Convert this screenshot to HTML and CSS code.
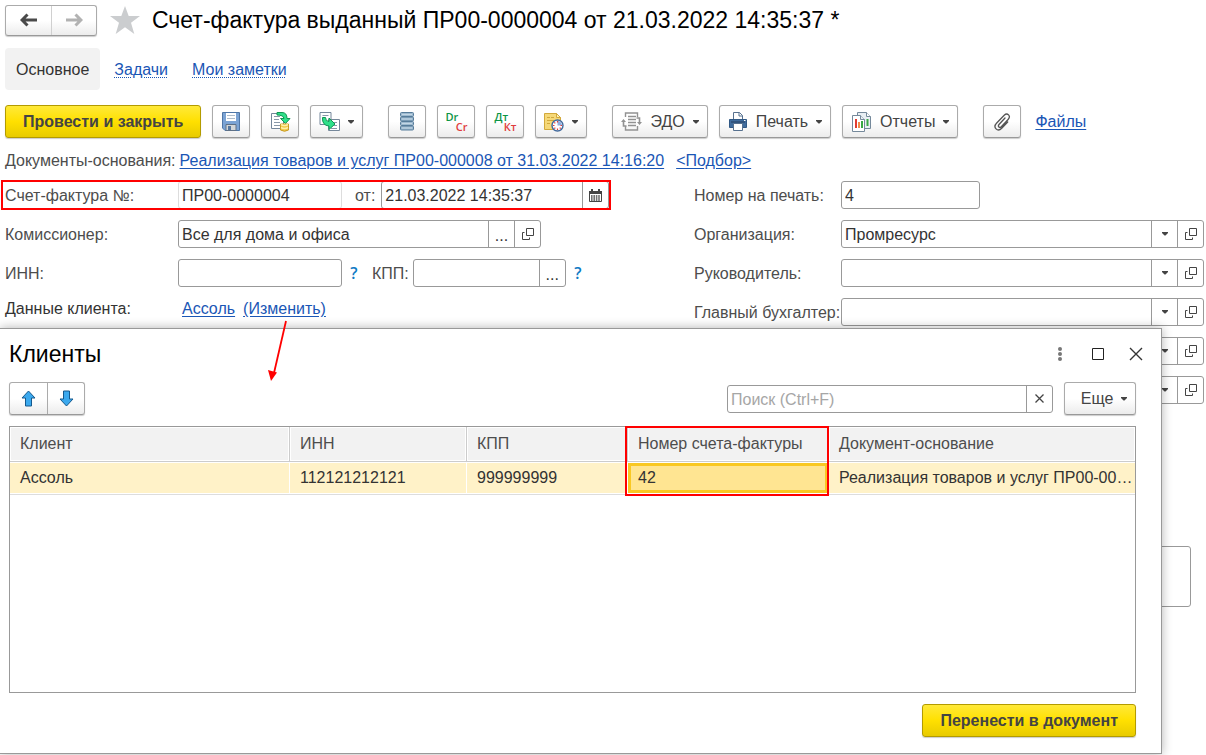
FILE: index.html
```html
<!DOCTYPE html>
<html lang="ru">
<head>
<meta charset="utf-8">
<title>Счет-фактура выданный</title>
<link rel="stylesheet" href="styles.css">
</head>
<body>
<svg width="0" height="0" class="defs" aria-hidden="true">
  <symbol id="open" viewBox="0 0 12 12"><path d="M4.500 .5h7v7h-7zM2.500 4.500h-2v7h7v-2" fill="none" stroke="#444"/></symbol>
  <symbol id="caret" viewBox="0 0 6 4"><path d="M0 0h6v1L3.500 3.500h-1L0 1z" fill="#444"/></symbol>
</svg>
<main class="page">
  <header class="head">
    <div class="pair nav">
      <button aria-label="Назад"><svg width="18" height="14" viewBox="0 0 18 14"><path d="M2 7h15M7.500 1.500L2 7l5.500 5.500" fill="none" stroke="#4a4a4a" stroke-width="3"/></svg></button>
      <button aria-label="Вперед"><svg width="18" height="14" viewBox="0 0 18 14"><path d="M1 7h15M10.500 1.500L16 7l-5.500 5.500" fill="none" stroke="#b2b2b2" stroke-width="3"/></svg></button>
    </div>
    <svg class="star" width="30" height="28" viewBox="0 0 30 28"><path d="M15 0l3.700 10H30l-9 6.800L24.300 28 15 21.300 5.700 28 9 16.800 0 10h11.300z" fill="#cbcdcf"/></svg>
    <h1>Счет-фактура выданный ПР00-0000004 от 21.03.2022 14:35:37 *</h1>
  </header>

  <nav class="tabs">
    <span class="tab">Основное</span>
    <a href="#">Задачи</a>
    <a href="#">Мои заметки</a>
  </nav>

  <div class="toolbar">
    <div class="group">
      <button class="btn primary">Провести и закрыть</button>
      <button class="btn icon" aria-label="Записать"><svg width="18" height="19" viewBox="0 0 18 19"><path d="M.5 .5h17v18H3L.5 16z" fill="#7ba3d4" stroke="#4f76a6"/><path d="M4 1h10v8H4z" fill="#fff"/><path d="M5 3.500h8M5 6.500h8" stroke="#aebccb"/><path d="M4 12.500h10v6H4z" fill="#d3d6d8" stroke="#5e7086"/><path d="M6 14h3v4H6z" fill="#56779f"/></svg></button>
      <button class="btn icon" aria-label="Провести"><svg width="21" height="21" viewBox="0 0 21 21"><path d="M1.500 2.500h12v15h-12z" fill="#fff" stroke="#75879a"/><path d="M4 5.500h6M4 8.500h5M4 11.500h6M4 14.500h6" stroke="#8998a8"/><path d="M7 1.500h5q5 0 5 6h3l-4.500 5L10.500 7.500H14Q13.500 4 7 4z" fill="#2fe08a" stroke="#109653"/><path d="M10.500 13h8v6q-4 2.500-8 0z" fill="#f2ca4a" stroke="#c79a22"/><path d="M11 13.500q3.500 2 7 0M11 16.500q3.500 2 7 0" fill="none" stroke="#fff1aa" stroke-width="1.500"/></svg></button>
      <button class="btn drop" aria-label="Создать на основании"><svg width="21" height="21" viewBox="0 0 21 21"><path d="M1 1.500h11v12H1z" fill="#fff" stroke="#75879a"/><path d="M3.500 4.500h6M3.500 7.500h3" stroke="#8998a8"/><path d="M9.500 8.500h11v11h-11z" fill="#fff" stroke="#75879a"/><path d="M15 11.500h3M15 14.500h3M12 17.500h6" stroke="#8998a8"/><path d="M3.500 6.500h3q0 4 3.500 4V7l6 6-6 5.500V15q-7-.5-6.500-8.500z" fill="#2fe08a" stroke="#109653"/></svg><svg class="caret"><use href="#caret"/></svg></button>
    </div>
    <div class="group">
      <button class="btn icon" aria-label="Список"><svg width="14" height="19" viewBox="0 0 14 19"><g fill="#9db9cf" stroke="#577c9a"><rect x=".5" y=".5" width="13" height="4" rx="1"/><rect x=".5" y="5" width="13" height="4" rx="1"/><rect x=".5" y="9.500" width="13" height="4" rx="1"/><rect x=".5" y="14" width="13" height="4" rx="1"/></g><path d="M2 2.500h10M2 7h10M2 11.500h10M2 16h10" stroke="#c3d7e5"/></svg></button>
      <button class="btn icon"><span class="entry"><b>Dr</b><i>Cr</i></span></button>
      <button class="btn icon"><span class="entry"><b>Дт</b><i>Кт</i></span></button>
      <button class="btn drop" aria-label="Задача"><svg width="20" height="20" viewBox="0 0 20 20"><path d="M.5 1.500h12l4 4v12H.5z" fill="#f5d878" stroke="#d2a93b"/><path d="M12.500 1.500v4h4z" fill="#fff0b5" stroke="#d2a93b"/><path d="M3 5.500h3M7 5.500h3M3 8.500h7M3 11.500h3" stroke="#d2a93b"/><circle cx="13.500" cy="13.500" r="5.500" fill="#fff" stroke="#41699c" stroke-width="1.400"/><path d="M13.500 13.500V9a4.500 4.500 0 0 1 4.500 4.500z" fill="#8eaee0"/><path d="M13.500 9v1.500M13.500 16.500V18M9 13.500h1.500M16.500 13.500H18M10.300 10.300l1 1M16.700 16.700l-1-1M10.300 16.700l1-1" stroke="#e03a3a" stroke-width="1.200"/></svg><svg class="caret"><use href="#caret"/></svg></button>
    </div>
    <div class="group">
      <button class="btn drop"><svg width="21" height="19" viewBox="0 0 21 19"><path d="M4.500 5V1h12v4M4.500 14v4h12v-4M7 4.500h8M7 7.500h8M7 10.500h8M7 13.500h8" fill="none" stroke="#929292" stroke-width="1.400"/><path d="M2.500 9v5h3M18.500 11V6h-3" fill="none" stroke="#929292" stroke-width="1.600"/><path d="M0 10l2.500-3L5 10zM16 10h5l-2.500 3z" fill="#929292"/></svg><span>ЭДО</span><svg class="caret"><use href="#caret"/></svg></button>
      <button class="btn drop"><svg width="20" height="19" viewBox="0 0 20 19"><path d="M5.500 8V.5h6l3 3V8" fill="#fff" stroke="#57718f"/><path d="M11 .5v3.500h3.500" fill="none" stroke="#57718f"/><path d="M1.500 7.500h17v8h-17z" fill="#406c9d" stroke="#315985"/><path d="M3 10h14" stroke="#253f60"/><path d="M5.500 11.500h9v7h-9z" fill="#fff" stroke="#57718f"/><path d="M16 8.500h1.500" stroke="#fff"/></svg><span>Печать</span><svg class="caret"><use href="#caret"/></svg></button>
      <button class="btn drop"><svg width="21" height="20" viewBox="0 0 21 20"><path d="M6.500 .5h9l4 4v12h-13z" fill="#e9eff3" stroke="#75899b"/><path d="M15.500 .5v4h4" fill="#fff" stroke="#75899b"/><path d="M16.500 7v7" stroke="#39a845" stroke-width="2"/><path d="M1.500 3.500h8l4 4v12h-12z" fill="#fff" stroke="#75899b"/><path d="M9.500 3.500v4h4" fill="#e9eff3" stroke="#75899b"/><path d="M5 7v9" stroke="#e23c32" stroke-width="2"/><path d="M8 10v6" stroke="#f28b48" stroke-width="2"/><path d="M11 9v7" stroke="#39a845" stroke-width="2"/></svg><span>Отчеты</span><svg class="caret"><use href="#caret"/></svg></button>
    </div>
    <div class="group files">
      <button class="btn icon" aria-label="Вложения"><svg width="18" height="18" viewBox="0 0 18 18"><path d="M12 5l-6 6.500c-1.600 1.900.6 3.900 2.300 2.200l6.800-7.200C18.300 3 14.400-.8 11.200 2.200L3.700 10C-.6 14.500 4.600 19.300 8.700 15.300l6-6.300" fill="none" stroke="#555" stroke-width="1.300" stroke-linecap="round"/></svg></button>
      <a href="#">Файлы</a>
    </div>
  </div>

  <div class="basis">
    <span class="lbl">Документы-основания:</span>
    <a href="#">Реализация товаров и услуг ПР00-000008 от 31.03.2022 14:16:20</a>
    <a href="#">&lt;Подбор&gt;</a>
  </div>

  <form class="form">
    <div class="col left">
      <div class="row marked">
        <label for="num">Счет-фактура №:</label>
        <div class="field short pale"><input id="num" value="ПР00-0000004"></div>
        <label class="mid" for="date">от:</label>
        <div class="field date"><input id="date" value="21.03.2022 14:35:37"><button type="button" aria-label="Календарь"><svg width="13" height="13" viewBox="0 0 13 13"><path d="M.5 2.500h12v10H.5z" fill="#fff" stroke="#444"/><path d="M0 2h13v3H0zM2 0h2v3H2zM9 0h2v3H9z" fill="#444"/><path d="M2 7h9M2 9h9M2 11h9" stroke="#444" stroke-width="1.300" stroke-dasharray="1.600 .8"/></svg></button></div>
      </div>
      <div class="row">
        <label for="com">Комиссионер:</label>
        <div class="field wide"><input id="com" value="Все для дома и офиса"><button type="button" class="pick">...</button><button type="button" aria-label="Открыть"><svg width="12" height="12"><use href="#open"/></svg></button></div>
      </div>
      <div class="row">
        <label for="inn">ИНН:</label>
        <div class="field short"><input id="inn"></div>
        <button type="button" class="help">?</button>
        <label class="kpp" for="kpp">КПП:</label>
        <div class="field code"><input id="kpp"><button type="button" class="pick">...</button></div>
        <button type="button" class="help">?</button>
      </div>
      <div class="row client">
        <span class="lbl">Данные клиента:</span>
        <a href="#">Ассоль</a>
        <a href="#">(Изменить)</a>
      </div>
    </div>
    <div class="col right">
      <div class="row"><label for="prn">Номер на печать:</label><div class="field print"><input id="prn" value="4"></div></div>
      <div class="row"><label for="org">Организация:</label><div class="field grow"><input id="org" value="Промресурс"><button type="button" aria-label="Выбрать"><svg class="caret"><use href="#caret"/></svg></button><button type="button" aria-label="Открыть"><svg width="12" height="12"><use href="#open"/></svg></button></div></div>
      <div class="row"><label for="dir">Руководитель:</label><div class="field grow"><input id="dir"><button type="button" aria-label="Выбрать"><svg class="caret"><use href="#caret"/></svg></button><button type="button" aria-label="Открыть"><svg width="12" height="12"><use href="#open"/></svg></button></div></div>
      <div class="row"><label for="acc">Главный бухгалтер:</label><div class="field grow"><input id="acc"><button type="button" aria-label="Выбрать"><svg class="caret"><use href="#caret"/></svg></button><button type="button" aria-label="Открыть"><svg width="12" height="12"><use href="#open"/></svg></button></div></div>
      <div class="row"><span class="lbl"></span><div class="field grow"><input aria-label="Поле"><button type="button" aria-label="Выбрать"><svg class="caret"><use href="#caret"/></svg></button><button type="button" aria-label="Открыть"><svg width="12" height="12"><use href="#open"/></svg></button></div></div>
      <div class="row"><span class="lbl"></span><div class="field grow"><input aria-label="Поле"><button type="button" aria-label="Выбрать"><svg class="caret"><use href="#caret"/></svg></button><button type="button" aria-label="Открыть"><svg width="12" height="12"><use href="#open"/></svg></button></div></div>
      <textarea class="note" aria-label="Комментарий"></textarea>
    </div>
  </form>

  <section class="dialog" role="dialog" aria-labelledby="dlg">
    <header class="dlg-head">
      <h2 id="dlg">Клиенты</h2>
      <button aria-label="Меню"><svg width="6" height="14" viewBox="0 0 6 14" fill="#777"><circle cx="3" cy="2" r="2"/><circle cx="3" cy="7" r="2"/><circle cx="3" cy="12" r="2"/></svg></button>
      <button aria-label="Развернуть"><svg width="12" height="12" viewBox="0 0 12 12"><path d="M.5 .5h11v11H.5z" fill="none" stroke="#222"/></svg></button>
      <button aria-label="Закрыть"><svg width="14" height="14" viewBox="0 0 14 14"><path d="M1 1l12 12M13 1L1 13" stroke="#333" stroke-width="1.400"/></svg></button>
    </header>
    <div class="dlg-tools">
      <div class="pair">
        <button aria-label="Вверх"><svg width="15" height="17" viewBox="0 0 15 17"><path d="M7.500 1l6.500 7h-3.500v8h-6V8H1z" fill="#3ba9ee" stroke="#15598d"/></svg></button>
        <button aria-label="Вниз"><svg width="15" height="17" viewBox="0 0 15 17"><path d="M7.500 16L14 9h-3.500V1h-6v8H1z" fill="#3ba9ee" stroke="#15598d"/></svg></button>
      </div>
      <div class="field search"><input aria-label="Поиск" placeholder="Поиск (Ctrl+F)"><button type="button" aria-label="Очистить"><svg width="9" height="9" viewBox="0 0 9 9"><path d="M.5 .5l8 8M8.500 .5l-8 8" stroke="#444" stroke-width="1.300"/></svg></button></div>
      <button class="btn drop more"><span>Еще</span><svg class="caret"><use href="#caret"/></svg></button>
    </div>
    <div class="list">
      <table>
        <colgroup><col class="c1"><col class="c2"><col class="c3"><col class="c4"><col></colgroup>
        <thead><tr><th>Клиент</th><th>ИНН</th><th>КПП</th><th class="mark">Номер счета-фактуры</th><th>Документ-основание</th></tr></thead>
        <tbody><tr><td>Ассоль</td><td>112121212121</td><td>999999999</td><td class="active">42</td><td>Реализация товаров и услуг ПР00-00…</td></tr></tbody>
      </table>
    </div>
    <footer><button class="btn primary">Перенести в документ</button></footer>
  </section>

  <svg class="arrow" width="24" height="62" viewBox="0 0 24 62"><path d="M19 1L7 53" stroke="#f00" stroke-width="1.800"/><path d="M1 50l9 2.500L4 61z" fill="#f00"/></svg>
</main>
</body>
</html>
```
FILE: styles.css
```css
*, *::before, *::after { box-sizing: border-box; }
body {
  margin: 0;
  background: #fff;
  color: #333;
  font: 16px/20px "Liberation Sans", Arial, sans-serif;
}
.defs { position: absolute; }
button, input, textarea { font: inherit; color: inherit; margin: 0; padding: 0; }
button { background: none; border: 0; }
svg { display: block; flex: none; }
a { color: #1a56b5; text-underline-offset: 2px; }
label, .lbl { color: #4d4d4d; white-space: nowrap; }
.caret { width: 6px; height: 4px; }

.page { position: relative; min-height: 100vh; overflow: hidden; }

.head { display: flex; align-items: center; height: 40px; padding-left: 5px; }
.head h1 { margin: 0 0 0 12px; font-size: 23px; line-height: 28px; font-weight: 400; color: #000; white-space: nowrap; }
.star { margin-left: 13px; }
.pair { display: flex; border: 1px solid #ababab; border-bottom-color: #999; border-radius: 3px; background: linear-gradient(#fff 50%, #ececec); box-shadow: 0 1px 1px #ccc; }
.pair button { width: 37px; height: 31px; display: flex; align-items: center; justify-content: center; }
.pair button + button { border-left: 1px solid #ababab; }
.nav button { width: 45px; height: 29px; }
.nav button + button { width: 45px; border-color: #d0d0d0; }

.tabs { display: flex; align-items: center; gap: 24px; margin: 8px 5px 0; height: 42px; }
.tab { padding: 12px 11px 10px; margin-right: -10px; background: #f2f2f2; border-radius: 4px; }
.tabs a { padding-top: 2px; text-decoration: underline dotted; text-decoration-thickness: 1px; }

.toolbar { display: flex; gap: 25px; padding: 15px 5px 0; }
.group { display: flex; align-items: center; gap: 11px; }
.files { gap: 14px; }
.btn {
  display: flex; align-items: center; justify-content: center;
  height: 33px; border: 1px solid #ababab; border-bottom-color: #999; border-radius: 3px;
  background: linear-gradient(#fff 50%, #ececec); box-shadow: 0 1px 1px #ccc; color: #444; white-space: nowrap;
}
.icon { width: 38px; }
.drop { padding: 0 8px; }
.drop svg + .caret { margin-left: 8px; }
.drop span { margin: 0 8px; }
.primary { padding: 0 17px; border-color: #b39b00; background: linear-gradient(#ffe939, #ffe000 50%, #e8cb00); font-weight: 700; }
.entry { display: flex; flex-direction: column; width: 22px; font: 600 11px/10px "Open Sans", sans-serif; text-align: left; }
.entry b { font-weight: 600; color: #0c9445; }
.entry i { color: #e03c3c; font-style: normal; align-self: flex-end; }

.basis { display: flex; gap: 12px; padding: 13px 5px 0; white-space: nowrap; }
.basis .lbl { margin-right: -8px; }

.form { display: grid; grid-template-columns: 689px 1fr; padding: 10px 2px 0 5px; }
.col { display: flex; flex-direction: column; gap: 11px; }
.row { display: flex; align-items: center; height: 28px; }
.row label { padding-top: 2px; }
.left .row > label:first-child, .left .lbl { width: 173px; }
.right .row > :first-child { width: 147px; }
.field { display: flex; height: 28px; border: 1px solid #999; border-radius: 3px; background: #fff; overflow: hidden; }
.field input { flex: 1; min-width: 0; border: 0; outline: 0; padding: 2px 3px 0; background: none; }
.field button { width: 26px; border-left: 1px solid #999; display: flex; align-items: center; justify-content: center; }
.field .pick { padding-top: 4px; }
.short { width: 164px; }
.pale { border-color: #ddd; }
.mid { margin: 0 6px 0 13px; }
.date { width: 228px; }
.wide { width: 363px; }
.code { width: 153px; }
.print { width: 139px; }
.grow { flex: 1; }
.help { width: 24px; color: #0f7ac4; font: 600 16px/20px "Open Sans", sans-serif; }
.kpp { margin: 0 4px 0 6px; }
.marked { position: relative; align-self: flex-start; }
.marked::after { content: ""; position: absolute; inset: -1px -2px -1px -4px; border: 2px solid #f00; pointer-events: none; }
.client { height: 22px; gap: 8px; }
.client .lbl { margin-right: -4px; color: #333; }
.note { margin: 131px 13px 0 147px; height: 61px; border: 1px solid #999; border-radius: 3px; resize: none; }

.dialog {
  position: absolute; left: 0; right: 44px; top: 328px;
  padding: 0 25px 16px 9px; background: #fff;
  border: solid #999; border-width: 1px 1px 1px 0; box-shadow: 0 0 10px rgba(0, 0, 0, .3);
}
.dlg-head { display: flex; align-items: center; height: 50px; }
.dlg-head h2 { flex: 1; margin: 0; font-size: 23px; line-height: 28px; font-weight: 400; color: #000; }
.dlg-head button { width: 38px; height: 24px; display: flex; align-items: center; justify-content: center; }
.dlg-head button:last-child { margin-right: -19px; }
.dlg-tools { display: flex; align-items: center; margin: 3px 0 11px; gap: 11px; }
.search { width: 326px; margin-left: auto; }
.search input::placeholder { color: #a6a6a6; opacity: 1; }
.more { width: 72px; }
.list { height: 267px; border: 1px solid #999; }
table { width: 100%; table-layout: fixed; border-collapse: separate; border-spacing: 0; }
.c1 { width: 280px; } .c2 { width: 177px; } .c3 { width: 161px; } .c4 { width: 201px; }
th, td { text-align: left; font-weight: 400; padding: 0 10px; white-space: nowrap; }
th:last-child, td:last-child { padding-right: 0; }
th { position: relative; height: 35px; color: #4d4d4d; background: #f2f2f2; border-right: 1px solid #ccc; border-bottom: 1px solid #ccc; box-shadow: inset 0 0 0 1px #fff; }
td { height: 32px; background: #fff2c8 padding-box; border: solid #fff; border-width: 1px 1px 1px 0; box-shadow: 0 1px #ddd; }
th:last-child, td:last-child { border-right: 0; }
.active { background-color: #ffe592; box-shadow: inset 0 0 0 3px #f9c823, 0 1px #ddd; }
.mark::after { content: ""; position: absolute; left: -3px; right: -1px; top: -1px; height: 70px; border: 2px solid #f00; z-index: 1; }
footer { display: flex; justify-content: flex-end; padding-top: 11px; }
.arrow { position: absolute; left: 267px; top: 320px; }
```
